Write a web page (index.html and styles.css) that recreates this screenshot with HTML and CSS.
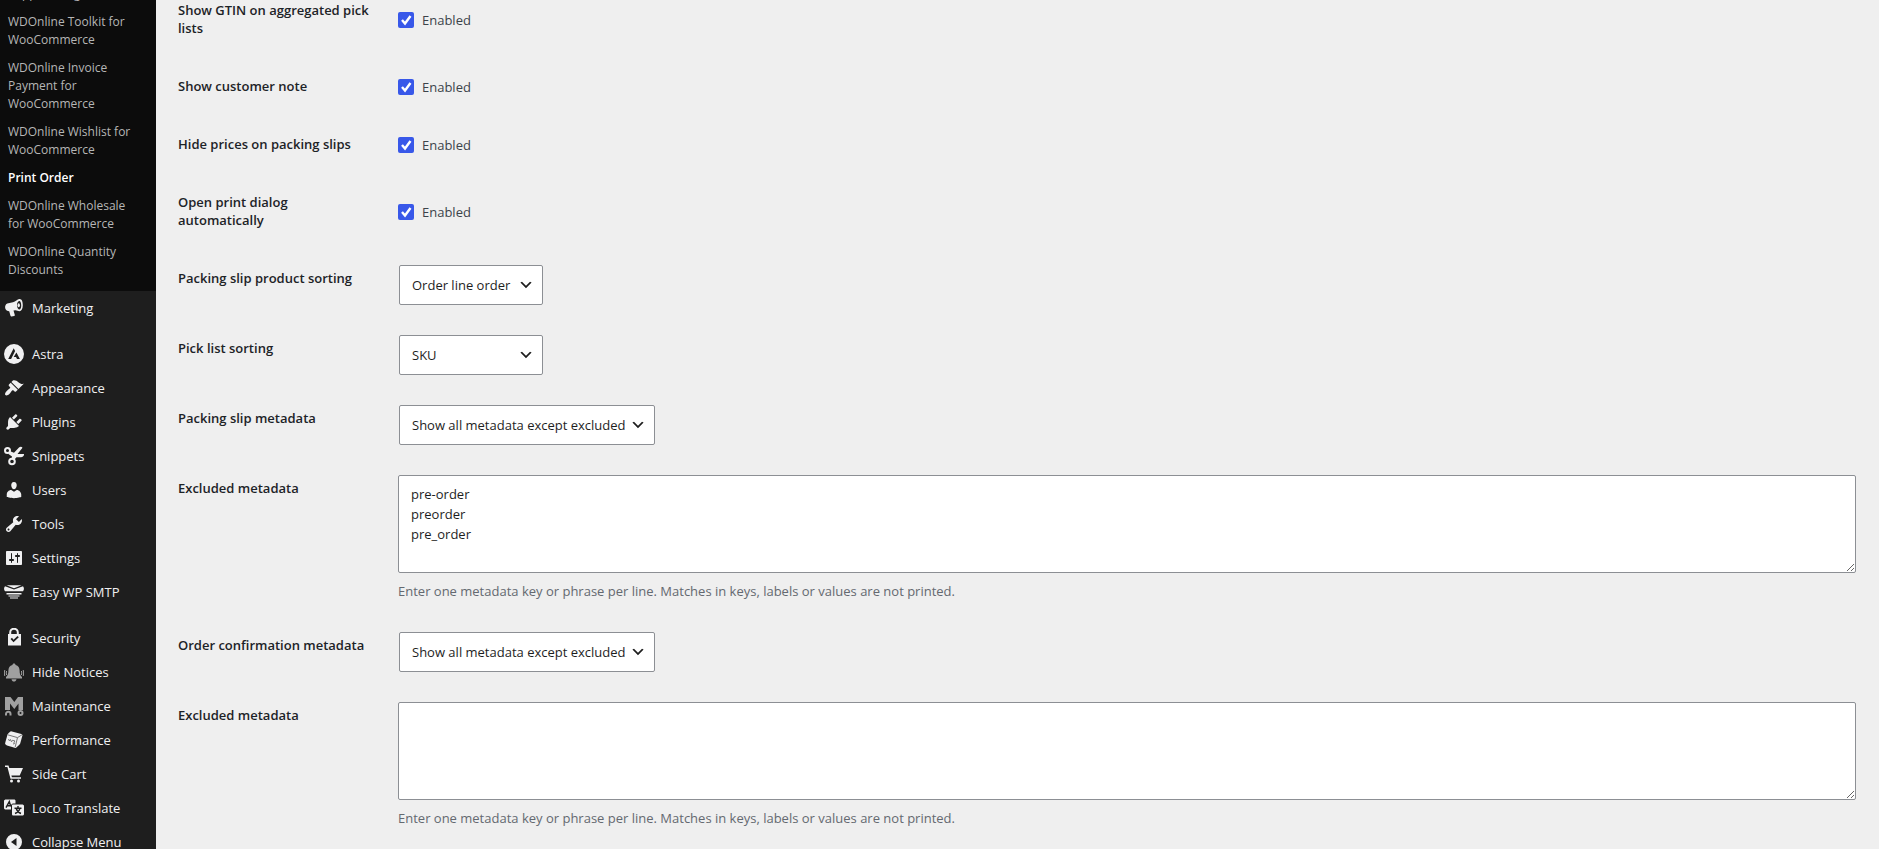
FILE: index.html
```
<!DOCTYPE html>
<html lang="en">
<head>
    <meta charset="UTF-8">
    <meta name="viewport" content="width=device-width, initial-scale=1.0">
    <title>Print Order</title>
    <link rel="stylesheet" href="styles.css">
</head>
<body>
    <nav class="admin-menu">
        <ul class="submenu">
            <li><a href="#">Support Plugin</a></li>
            <li><a href="#">WDOnline Toolkit for WooCommerce</a></li>
            <li><a href="#">WDOnline Invoice Payment for WooCommerce</a></li>
            <li><a href="#">WDOnline Wishlist for WooCommerce</a></li>
            <li><a href="#" class="current">Print Order</a></li>
            <li><a href="#">WDOnline Wholesale for WooCommerce</a></li>
            <li><a href="#">WDOnline Quantity Discounts</a></li>
        </ul>
        <ul class="menu">
            <li><a href="#">
                <svg viewBox="0 0 20 20"><path fill-rule="evenodd" d="M15.300 1.100c2.500-.3 3.500 2.600 3.500 6.100-.1 3.500-1.300 5.900-3.400 6-1.300 0-2.400-.7-4-.9l-1.900.2 1.300 4.400c.1.600-.2.900-.7 1L7.500 18.400c-.5.100-.8-.1-1-.6L5.200 13.300c-1.600 0-3.600-1.300-4-3-.4-1.900.3-3.800 2-4.700L9 4.300c2.600-.8 4.300-2.900 6.300-3.200zM15.200 2.900c-1.300.2-2.300 2.200-2.200 4.500.1 2.300 1.200 4.100 2.500 4 1.200-.2 1.800-2.100 1.700-4.400-.1-2.300-.8-4.200-2-4.100z"/><ellipse cx="14.700" cy="7.200" rx="1.200" ry="2"/></svg>
                Marketing</a></li>
            <li class="separator"></li>
            <li><a href="#">
                <svg viewBox="0 0 20 20"><path fill-rule="evenodd" d="M10 0a10 10 0 1 0 0 20 10 10 0 0 0 0-20zM9.700 4.200l1.400 2.700-4 8.200H4.200zM12.400 8.500l3.500 6.600h-2.900l-1-2.100H9.700z"/></svg>
                Astra</a></li>
            <li><a href="#">
                <svg viewBox="0 0 20 20"><path d="M14.480 11.060L7.410 3.990l1.500-1.500c.5-.56 2.300-.47 3.510.32 1.210.8 1.430 1.280 2.910 2.100 1.180.64 2.450 1.260 4.450.85zm-.71.71L6.700 4.700 4.930 6.470c-.39.390-.39 1.020 0 1.410l1.060 1.060c.39.390.39 1.030 0 1.420-.6.6-1.430 1.110-2.210 1.690-.35.260-.7.530-1.010.840C1.430 14.230.4 16.080 1.400 17.070c.99 1 2.840-.03 4.180-1.360.31-.31.580-.66.850-1.020.57-.78 1.080-1.610 1.690-2.210.39-.39 1.020-.39 1.410 0l1.060 1.060c.39.390 1.020.390 1.410 0z"/></svg>
                Appearance</a></li>
            <li><a href="#">
                <svg viewBox="0 0 20 20"><path d="M13.110 4.360L9.870 7.600 8 5.730l3.240-3.240c.35-.34 1.050-.2 1.560.32.520.51.660 1.210.31 1.550zm-8 1.770l.91-1.120 9.010 9.010-1.190.84c-.71.71-2.630 1.160-3.820 1.160H6.140L4.900 17.260c-.59.590-1.540.590-2.120 0-.59-.58-.59-1.530 0-2.120l1.240-1.240v-3.880c0-1.130.4-3.190 1.090-3.890zm7.260 3.970l3.240-3.240c.34-.35 1.040-.21 1.550.31.520.51.660 1.210.31 1.550l-3.240 3.250z"/></svg>
                Plugins</a></li>
            <li><a href="#">
                <svg viewBox="0 0 20 20"><path d="M5.500 5l4.500 1.800L15 1.500c1.300-1.200 2.900-.8 3.500.2L13.500 8H20c.2 2-1.300 3.200-3 3.200h-4.500l-2 2.300-3-.8.500-2.200L4.500 8z"/><circle class="stroke" cx="3.500" cy="4.500" r="2.500"/><circle class="stroke" cx="8" cy="15.500" r="2.800"/></svg>
                Snippets</a></li>
            <li><a href="#">
                <svg viewBox="0 0 20 20"><path d="M10 9.250c-2.270 0-2.730-3.440-2.730-3.440C7 4.020 7.820 2 9.970 2c2.160 0 2.980 2.020 2.710 3.810 0 0-.41 3.440-2.680 3.440zm0 2.570L12.720 10c2.390 0 4.520 2.330 4.520 4.530v2.490s-3.650 1.130-7.240 1.130c-3.650 0-7.240-1.130-7.240-1.130v-2.490c0-2.250 1.940-4.480 4.470-4.480z"/></svg>
                Users</a></li>
            <li><a href="#">
                <svg viewBox="0 0 20 20"><path d="M16.680 9.770c-1.340 1.340-3.300 1.670-4.950.99l-5.410 6.520c-.99.990-2.590.990-3.580 0s-.99-2.590 0-3.570l6.520-5.420c-.68-1.650-.35-3.610.99-4.950 1.280-1.280 3.120-1.620 4.720-1.060l-2.890 2.890 2.820 2.820 2.860-2.870c.53 1.580.180 3.390-1.080 4.650zM3.810 16.210c.4.390 1.040.390 1.430 0 .4-.4.400-1.040 0-1.430-.39-.4-1.030-.4-1.430 0-.39.390-.39 1.030 0 1.430z"/></svg>
                Tools</a></li>
            <li><a href="#">
                <svg viewBox="0 0 20 20"><path fill-rule="evenodd" d="M18 16V4c0-.55-.45-1-1-1H3c-.55 0-1 .45-1 1v12c0 .55.450 1 1 1h14c.55 0 1-.45 1-1zM8 11h1c.55 0 1 .45 1 1s-.45 1-1 1H8v1.500c0 .28-.22.5-.5.5s-.5-.22-.5-.5V13H6c-.55 0-1-.45-1-1s.45-1 1-1h1V5.500c0-.28.220-.5.500-.5s.5.220.5.500V11zm5-2h-1c-.55 0-1-.45-1-1s.45-1 1-1h1V5.500c0-.28.220-.5.500-.5s.5.220.5.500V7h1c.55 0 1 .45 1 1s-.45 1-1 1h-1v5.500c0 .28-.22.5-.5.500s-.5-.22-.5-.5V9z"/></svg>
                Settings</a></li>
            <li><a href="#">
                <svg viewBox="0 0 20 20"><path d="M2.500 3.300h15L10 6.300zM1 4.300L10 7.600l9-3.300c1.300 1.500 1.200 3.600 0 5H1C-.2 7.900-.3 5.800 1 4.300zM2.500 11h15v1.600h-15zM4.500 13.600h11v1h-11zM6 15.500h8v1H6z"/></svg>
                Easy WP SMTP</a></li>
            <li class="separator"></li>
            <li><a href="#">
                <svg viewBox="0 0 20 20"><path fill-rule="evenodd" d="M5.200 6V4.500a4.800 4.800 0 0 1 9.600 0V6H17v11.500H4V6zm2 0h5.600V4.500a2.800 2.800 0 0 0-5.600 0zM6.500 11l3 3.300 5.300-5-1.300-1.400-4 3.800L8 9.700z"/></svg>
                Security</a></li>
            <li><a href="#">
                <svg class="dim" viewBox="0 0 20 20"><path d="M10 1.500c1 0 1.500.7 1.600 1.400 2.800.7 4 3 4 5.600 0 3 .5 5 2.400 6.500v1.500H2V15c1.900-1.500 2.400-3.500 2.400-6.500 0-2.600 1.200-4.900 4-5.600.1-.7.600-1.400 1.600-1.400zM7.500 17.200h5c-.3 1.500-1.300 2.300-2.500 2.300s-2.200-.8-2.500-2.300z"/><path class="line" d="M2.600 9q-.8 2 0 4M.8 8q-1 3 0 6M17.400 9q.8 2 0 4M19.200 8q1 3 0 6"/></svg>
                Hide Notices</a></li>
            <li><a href="#">
                <svg class="dim" viewBox="0 0 20 20"><path d="M1 1h5.500l3.800 5L14 1h5v13h-4.500V7.500L10.300 13 6 7.500V14H1z"/><path class="stroke" d="M2 19.500V18a2 2 0 0 1 4.500 0v1.500"/><circle class="stroke" cx="16.500" cy="17" r="2"/></svg>
                Maintenance</a></li>
            <li><a href="#">
                <svg viewBox="0 0 20 20"><path d="M7 1.200l10.300 2.800c.8.300 1.200.9 1.100 1.600L16.200 13.500c-.3.800-3.500 4-4.700 4.500L3 15.500c-1-.3-2-1.200-1.900-2.200L3.500 4.500c.3-1 2.500-3 3.500-3.300z"/><path class="edge" d="M3.700 4.800l9.800 2.800 4.500-2.800M13.500 7.600l-2.300 9.500M4.500 9l1 2 1-1.500 1 2.300 1.200-1.500M8.500 10.300l2.500.7-1 1.200q1.500 1.800-1 1.800"/></svg>
                Performance</a></li>
            <li><a href="#">
                <svg viewBox="0 0 20 20"><path d="M1 1.500h3.500L5.300 4H19l-3.300 7.500H7.400l.5 1.800H17v1.500H6.500L3.400 3H1z"/><circle cx="7.500" cy="17" r="1.500"/><circle cx="14.500" cy="17" r="1.500"/></svg>
                Side Cart</a></li>
            <li><a href="#">
                <svg viewBox="0 0 20 20"><path d="M2 1.500h8c1 0 1.500.5 1.500 1.500v2.500H9c-1 0-2 1-2 2v4H2c-1 0-2-.5-2-1.500V3c0-1 1-1.500 2-1.500zM9 6.500h9c1 0 2 .5 2 1.500v8c0 1-1 1.500-2 1.500H9.500c-1 0-1.500-.5-1.500-1.500V7.500c0-.6.400-1 1-1z"/><path class="cut" d="M2 9.700L5.300 3.500l1.500 5M3.200 7.800h3.600M14 8v2M10.500 10.300h7M11 15.500q4-1.500 4.800-5M12.200 10.500q1.300 4 4.800 5"/></svg>
                Loco Translate</a></li>
            <li><a href="#">
                <svg viewBox="0 0 20 20"><path fill-rule="evenodd" d="M10 2a8 8 0 1 0 0 16 8 8 0 0 0 0-16zM12.500 6v8L7 10z"/></svg>
                Collapse Menu</a></li>
        </ul>
    </nav>

    <main class="content">
        <table class="form-table">
            <tr>
                <th scope="row">Show GTIN on aggregated pick lists</th>
                <td><label class="check"><input type="checkbox" checked> Enabled</label></td>
            </tr>
            <tr>
                <th scope="row">Show customer note</th>
                <td><label class="check"><input type="checkbox" checked> Enabled</label></td>
            </tr>
            <tr>
                <th scope="row">Hide prices on packing slips</th>
                <td><label class="check"><input type="checkbox" checked> Enabled</label></td>
            </tr>
            <tr>
                <th scope="row">Open print dialog automatically</th>
                <td><label class="check"><input type="checkbox" checked> Enabled</label></td>
            </tr>
            <tr>
                <th scope="row"><label for="slip-sorting">Packing slip product sorting</label></th>
                <td><select id="slip-sorting" class="short"><option>Order line order</option><option>SKU</option></select></td>
            </tr>
            <tr>
                <th scope="row"><label for="pick-sorting">Pick list sorting</label></th>
                <td><select id="pick-sorting" class="short"><option>SKU</option><option>Order line order</option></select></td>
            </tr>
            <tr>
                <th scope="row"><label for="slip-meta">Packing slip metadata</label></th>
                <td><select id="slip-meta" class="long"><option>Show all metadata except excluded</option></select></td>
            </tr>
            <tr>
                <th scope="row"><label for="slip-excluded">Excluded metadata</label></th>
                <td>
                    <textarea id="slip-excluded" rows="4">pre-order
preorder
pre_order</textarea>
                    <p class="description">Enter one metadata key or phrase per line. Matches in keys, labels or values are not printed.</p>
                </td>
            </tr>
            <tr>
                <th scope="row"><label for="order-meta">Order confirmation metadata</label></th>
                <td><select id="order-meta" class="long"><option>Show all metadata except excluded</option></select></td>
            </tr>
            <tr>
                <th scope="row"><label for="order-excluded">Excluded metadata</label></th>
                <td>
                    <textarea id="order-excluded" rows="4"></textarea>
                    <p class="description">Enter one metadata key or phrase per line. Matches in keys, labels or values are not printed.</p>
                </td>
            </tr>
        </table>
    </main>
</body>
</html>
```
FILE: styles.css
```
* {
    box-sizing: border-box;
}
body {
    display: flex;
    height: 100vh;
    margin: 0;
    overflow: hidden;
    background-color: #efefef;
    color: #3c434a;
    font-family: "Segoe UI", "Open Sans", "Noto Sans", sans-serif;
    font-size: 13px;
}
/* the page is scrolled, so the first entries run off the top */
.admin-menu {
    flex: 0 0 156px;
    margin-top: -20px;
    background-color: #1e1e1e;
}
.submenu, .menu {
    list-style: none;
    margin: 0;
    padding: 0;
}
.admin-menu a {
    text-decoration: none;
}
.admin-menu .submenu {
    padding-bottom: 7px;
    background-color: #0c0c0c;
}
.submenu a {
    display: block;
    padding: 5px 14px 5px 8px;
    color: #b6b6b6;
    font-size: 12px;
    line-height: 18px;
}
.submenu a.current {
    color: #fff;
    font-weight: 600;
}
.menu a {
    display: flex;
    align-items: center;
    gap: 8px;
    height: 34px;
    padding-left: 4px;
    color: #f0f0f1;
    line-height: 18px;
}
.menu svg {
    width: 20px;
    height: 20px;
    fill: #f0f0f1;
}
.menu svg.dim {
    fill: #a0a0a0;
    color: #a0a0a0;
}
.menu .stroke {
    fill: none;
    stroke: currentColor;
    stroke-width: 2;
}
.menu .line {
    fill: none;
    stroke: currentColor;
    stroke-width: 1;
}
.menu .cut {
    fill: none;
    stroke: #1e1e1e;
    stroke-width: 1.4;
}
.menu .edge {
    fill: none;
    stroke: #777;
    stroke-width: 1;
}
.separator {
    height: 12px;
}
.content {
    flex: 1;
    min-width: 0;
    margin-top: -18px;
    padding: 0 13px 0 22px;
}
.form-table {
    width: 100%;
    border-collapse: collapse;
}
.form-table th {
    width: 210px;
    padding: 19px 14px 21px 0;
    color: #1d2327;
    font-weight: 600;
    line-height: 18px;
    text-align: left;
    vertical-align: top;
}
.form-table td {
    padding: 15px 10px;
    line-height: 18px;
    vertical-align: middle;
}
.check {
    display: flex;
    align-items: center;
    gap: 8px;
}
.check input {
    appearance: none;
    width: 16px;
    height: 16px;
    margin: 0;
    border-radius: 2px;
    background: #3858e9 url("data:image/svg+xml,%3Csvg xmlns='http://www.w3.org/2000/svg' viewBox='0 0 16 16'%3E%3Cpath d='M4 8l3 3.500 5.500-7.500' fill='none' stroke='white' stroke-width='2.400'/%3E%3C/svg%3E");
}
select {
    appearance: none;
    display: block;
    height: 40px;
    margin: 0 1px;
    padding: 0 24px 0 12px;
    border: 1px solid #8c8f94;
    border-radius: 2px;
    background: #fff url("data:image/svg+xml,%3Csvg xmlns='http://www.w3.org/2000/svg' viewBox='0 0 20 20'%3E%3Cpath d='M5 6l5 5 5-5 2 1-7 7-7-7z' fill='%231e1e1e'/%3E%3C/svg%3E") no-repeat right 8px center / 16px 16px;
    color: #1e1e1e;
    font: inherit;
}
.short {
    width: 144px;
}
.long {
    width: 256px;
}
textarea {
    display: block;
    width: 100%;
    height: 98px;
    padding: 8px 12px;
    border: 1px solid #8c8f94;
    border-radius: 2px;
    background-color: #fff;
    color: #1e1e1e;
    font: inherit;
    line-height: 20px;
    resize: vertical;
}
.description {
    margin: 8px 0 0;
    color: #646970;
    line-height: 21px;
}
```
